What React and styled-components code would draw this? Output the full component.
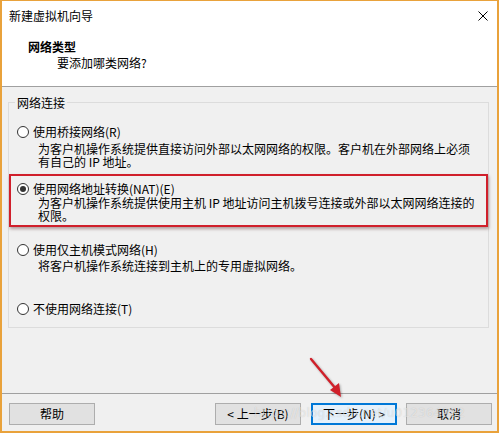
import React from 'react';
import styled, { createGlobalStyle } from 'styled-components';

const GlobalStyle = createGlobalStyle`
  html, body {
    margin: 0;
    padding: 0;
    background: #ffffff;
  }
  body {
    font-family: "Noto Sans CJK SC", "Liberation Sans", sans-serif;
    font-size: 12px;
    color: #000;
  }
`;

const options = [
  {
    key: 'bridge',
    label: '使用桥接网络(R)',
    desc: ['为客户机操作系统提供直接访问外部以太网网络的权限。客户机在外部网络上必须', '有自己的 IP 地址。'],
    gap: 3,
  },
  {
    key: 'nat',
    label: '使用网络地址转换(NAT)(E)',
    desc: ['为客户机操作系统提供使用主机 IP 地址访问主机拨号连接或外部以太网网络连接的', '权限。'],
    gap: 0,
    selected: true,
  },
  {
    key: 'host',
    label: '使用仅主机模式网络(H)',
    desc: ['将客户机操作系统连接到主机上的专用虚拟网络。'],
    gap: 2,
  },
  {
    key: 'none',
    label: '不使用网络连接(T)',
    desc: [],
    gap: 0,
  },
];

const App = () => {
  return (
    <>
      <GlobalStyle />
      <Window>
        <TitleBar>
          <Title>新建虚拟机向导</Title>
          <Close viewBox="0 0 10 10">
            <path d="M0.5 0.5 L9.5 9.5 M9.5 0.5 L0.5 9.5" stroke="#000" strokeWidth="1" />
          </Close>
        </TitleBar>
        <Header>
          <Heading>网络类型</Heading>
          <Subtitle>要添加哪类网络?</Subtitle>
        </Header>
        <Body>
          <GroupBox>
            <Legend>网络连接</Legend>
            <Option $top={16} $pad={8}>
              <OptionRow option={options[0]} />
            </Option>
            <Highlight>
              <OptionRow option={options[1]} />
            </Highlight>
            <Option $top={16} $pad={8}>
              <OptionRow option={options[2]} />
            </Option>
            <Option $top={30} $pad={8}>
              <OptionRow option={options[3]} />
            </Option>
          </GroupBox>
        </Body>
        <Footer>
          <Button>帮助</Button>
          <Spacer />
          <Button>&lt; 上一步(B)</Button>
          <Button $primary $left={10}>下一步(N) &gt;</Button>
          <Button $left={9}>取消</Button>
          <Watermark>https://blog.csdn.net/u012364982</Watermark>
        </Footer>
        <Arrow viewBox="0 0 40 44">
          <path d="M3 2 L28 32" stroke="#d0202a" strokeWidth="2.4" strokeLinecap="round" />
          <path d="M33 40 L22 33 L31 26 Z" fill="#d0202a" />
        </Arrow>
      </Window>
    </>
  );
};

const OptionRow = ({ option }) => (
  <>
    <LabelRow>
      <Radio $checked={option.selected} />
      <LabelText>{option.label}</LabelText>
    </LabelRow>
    {option.desc.length > 0 && (
      <Desc $gap={option.gap}>
        {option.desc.map((line) => (
          <DescLine key={line}>{line}</DescLine>
        ))}
      </Desc>
    )}
  </>
);

export default App;

const Window = styled.div`
  position: relative;
  width: 499px;
  height: 433px;
  box-sizing: border-box;
  border: 2px solid #e9a23b;
  border-top-width: 1px;
  display: flex;
  flex-direction: column;
  background: #f0f0f0;
  overflow: hidden;
`;

const TitleBar = styled.div`
  height: 29px;
  background: #fff;
  display: flex;
  align-items: center;
  justify-content: space-between;
  padding: 0 9px 0 7px;
`;

const Title = styled.div`
  font-size: 12px;
  line-height: 14px;
`;

const Close = styled.svg`
  width: 10px;
  height: 10px;
`;

const Header = styled.div`
  height: 57px;
  box-sizing: border-box;
  background: #fff;
  padding: 10px 0 0 26px;
  border-bottom: 1px solid #a0a0a0;
`;

const Heading = styled.div`
  font-weight: bold;
  line-height: 14px;
`;

const Subtitle = styled.div`
  margin-top: 2px;
  padding-left: 29px;
  line-height: 14px;
`;

const Body = styled.div`
  flex: 1;
  padding: 9px 8px 0 6px;
`;

const GroupBox = styled.fieldset`
  margin: 0;
  padding: 0 0 11px 0;
  border: 1px solid #dcdcdc;
  min-width: 0;
`;

const Legend = styled.legend`
  margin-left: 6px;
  padding: 0 2px;
  line-height: 13px;
`;

const Option = styled.div`
  margin-top: ${(p) => p.$top}px;
  padding-left: ${(p) => p.$pad}px;
`;

const Highlight = styled.div`
  margin-top: 6px;
  padding: 6px 0 3px 6px;
  border: 2px solid #d01f2b;
  box-shadow: 1px 2px 3px rgba(60, 0, 0, 0.35);
`;

const LabelRow = styled.div`
  display: flex;
  align-items: center;
  height: 14px;
`;

const Radio = styled.span`
  width: 12px;
  height: 12px;
  box-sizing: border-box;
  border-radius: 50%;
  border: 1px solid #333;
  background: #fff;
  position: relative;
  flex: none;
  &::after {
    content: '';
    display: ${(p) => (p.$checked ? 'block' : 'none')};
    position: absolute;
    left: 2px;
    top: 2px;
    width: 6px;
    height: 6px;
    border-radius: 50%;
    background: #333;
  }
`;

const LabelText = styled.span`
  margin-left: 4px;
  line-height: 14px;
  white-space: nowrap;
`;

const Desc = styled.div`
  margin-top: ${(p) => p.$gap}px;
  padding-left: 21px;
`;

const DescLine = styled.div`
  line-height: 13px;
  white-space: nowrap;
`;

const Footer = styled.div`
  position: relative;
  height: 38px;
  box-sizing: border-box;
  border-top: 1px solid #a0a0a0;
  display: flex;
  align-items: flex-start;
  padding: 9px 5px 0 7px;
`;

const Spacer = styled.div`
  flex: 1;
`;

const Button = styled.div`
  width: 86px;
  height: 22px;
  box-sizing: border-box;
  margin-left: ${(p) => p.$left || 0}px;
  border: 1px solid ${(p) => (p.$primary ? '#0078d7' : '#adadad')};
  box-shadow: ${(p) => (p.$primary ? 'inset 0 0 0 1px #0078d7' : 'none')};
  background: ${(p) => (p.$primary ? '#e5f1fb' : '#e1e1e1')};
  display: flex;
  align-items: center;
  justify-content: center;
  font-size: 12px;
  line-height: 14px;
  white-space: nowrap;
`;

const Watermark = styled.div`
  position: absolute;
  left: 252px;
  top: 12px;
  font-family: "DejaVu Sans", sans-serif;
  font-size: 12px;
  letter-spacing: 0.2px;
  color: rgba(255, 255, 255, 0.55);
  text-shadow: 0 0 1px rgba(0, 0, 0, 0.18);
  pointer-events: none;
  white-space: nowrap;
`;

const Arrow = styled.svg`
  position: absolute;
  left: 306px;
  top: 356px;
  width: 40px;
  height: 44px;
  filter: drop-shadow(1px 1px 1px rgba(0, 0, 0, 0.3));
`;
